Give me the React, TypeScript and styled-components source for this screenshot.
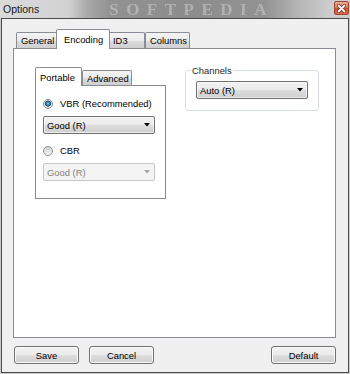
import styled, { createGlobalStyle } from "styled-components";

const GlobalStyle = createGlobalStyle`
  html, body {
    margin: 0;
    padding: 0;
  }

  body {
    width: 350px;
    height: 374px;
    overflow: hidden;
    background: #c9c9c9;
    font-family: "Liberation Sans", Arial, sans-serif;
    font-size: 9.4px;
    color: #000;
  }
`;

function ArrowIcon({ color }: { color: string }) {
  return (
    <svg width="6" height="4" viewBox="0 0 6 4">
      <polygon points="0,0 6,0 3,3.5" fill={color} />
    </svg>
  );
}

function CloseIcon() {
  return (
    <svg width="9" height="9" viewBox="0 0 9 9">
      <path d="M1.5 1.5 L7.5 7.5 M7.5 1.5 L1.5 7.5" stroke="#6a3024" strokeWidth="3.4" strokeLinecap="round" />
      <path d="M1.5 1.5 L7.5 7.5 M7.5 1.5 L1.5 7.5" stroke="#ffffff" strokeWidth="1.8" strokeLinecap="round" />
    </svg>
  );
}

function Radio({ checked, label }: { checked?: boolean; label: string }) {
  return (
    <RadioRow>
      <RadioDot $checked={checked} />
      <span>{label}</span>
    </RadioRow>
  );
}

function ComboBox({ value, disabled }: { value: string; disabled?: boolean }) {
  return (
    <Combo $disabled={disabled}>
      <span>{value}</span>
      <ArrowIcon color={disabled ? "#a6a6a6" : "#000"} />
    </Combo>
  );
}

const outerTabs = [
  { label: "General", w: 42 },
  { label: "Encoding", w: 50, selected: true },
  { label: "ID3", w: 37 },
  { label: "Columns", w: 45 },
];

export default function App() {
  return (
    <>
      <GlobalStyle />
      <Window>
        <TitleBar>
          <Title>Options</Title>
          <Watermark>SOFTPEDIA</Watermark>
          <CloseButton>
            <CloseIcon />
          </CloseButton>
        </TitleBar>

        <Client>
          <TabStrip>
            {outerTabs.map((t) => (
              <Tab key={t.label} $w={t.w} $selected={t.selected} $spread>
                {t.label}
              </Tab>
            ))}
          </TabStrip>

          <Panel>
            <SubTabs>
              <SubStrip>
                <Tab $w={47} $selected>
                  Portable
                </Tab>
                <Tab $w={50} $short>
                  Advanced
                </Tab>
              </SubStrip>
              <SubPanel>
                <OptionGroup>
                  <Radio checked label="VBR (Recommended)" />
                  <ComboBox value="Good (R)" />
                </OptionGroup>
                <OptionGroup>
                  <Radio label="CBR" />
                  <ComboBox value="Good (R)" disabled />
                </OptionGroup>
              </SubPanel>
            </SubTabs>

            <GroupBox>
              <Legend>Channels</Legend>
              <ComboBox value="Auto (R)" />
            </GroupBox>
          </Panel>

          <ButtonBar>
            <PushButton>Save</PushButton>
            <PushButton>Cancel</PushButton>
            <PushButton $right>Default</PushButton>
          </ButtonBar>
        </Client>
      </Window>
    </>
  );
}

const Window = styled.div`
  width: 350px;
  height: 374px;
  display: flex;
  flex-direction: column;
`;

const TitleBar = styled.div`
  height: 18px;
  display: flex;
  align-items: flex-start;
  background: linear-gradient(
    90deg,
    #dadada 0,
    #d2d2d2 68px,
    #a8a8a8 88px,
    #929292 110px,
    #8c8c8c 190px,
    #939393 265px,
    #b6b6b6 300px,
    #cdcdcd 330px
  );
`;

const Title = styled.div`
  padding: 3px 0 0 3px;
  font-size: 10.5px;
  line-height: 12px;
  color: #1a1a1a;
`;

const Watermark = styled.div`
  margin: 1px 0 0 70px;
  font-family: "Liberation Serif", "Times New Roman", serif;
  font-weight: bold;
  font-size: 17px;
  line-height: 17px;
  letter-spacing: 7.5px;
  color: rgba(220, 220, 220, 0.45);
  filter: blur(0.7px);
  white-space: nowrap;
`;

const CloseButton = styled.div`
  box-sizing: border-box;
  width: 15px;
  height: 14px;
  margin: 1px 1px 0 auto;
  display: flex;
  align-items: center;
  justify-content: center;
  border: 1px solid #9a4632;
  border-radius: 2px;
  background: linear-gradient(#eeaa94 0%, #df7a5d 45%, #cd4d2e 55%, #dc6c48 100%);
`;

const Client = styled.div`
  box-sizing: border-box;
  height: 355px;
  margin: 0 1px;
  display: flex;
  flex-direction: column;
  padding: 10px 12px 8px 11px;
  border: 1px solid #4b4b4b;
  background: #f0f0f0;
`;

const TabStrip = styled.div`
  height: 19px;
  display: flex;
  align-items: flex-end;
  padding-left: 3px;
`;

const Tab = styled.div<{ $w: number; $selected?: boolean; $spread?: boolean; $short?: boolean }>`
  position: relative;
  box-sizing: border-box;
  flex: none;
  width: ${(p) => p.$w + (p.$selected && p.$spread ? 4 : 0)}px;
  height: ${(p) => (p.$selected ? (p.$spread ? 20 : 19) : p.$short ? 15 : 16)}px;
  margin: ${(p) => (p.$selected ? (p.$spread ? "0 -2px -1px" : "0 0 -1px") : "0")};
  padding-left: ${(p) => (p.$selected && p.$spread ? 7 : 4)}px;
  display: flex;
  align-items: center;
  white-space: nowrap;
  border: 1px solid #898c95;
  border-bottom: none;
  border-radius: 2px 2px 0 0;
  background: ${(p) =>
    p.$selected ? "#ffffff" : "linear-gradient(#f3f3f3 0%, #ebebeb 50%, #dddddd 51%, #cfcfcf 100%)"};
  z-index: ${(p) => (p.$selected ? 2 : 1)};
`;

const Panel = styled.div`
  position: relative;
  z-index: 0;
  flex: 1;
  display: flex;
  align-items: flex-start;
  padding: 18px 0 0 21px;
  border: 1px solid #898c95;
  background: #ffffff;
`;

const SubTabs = styled.div`
  width: 131px;
  display: flex;
  flex-direction: column;
`;

const SubStrip = styled.div`
  height: 18px;
  display: flex;
  align-items: flex-end;
`;

const SubPanel = styled.div`
  position: relative;
  z-index: 0;
  box-sizing: border-box;
  height: 114px;
  display: flex;
  flex-direction: column;
  gap: 10px;
  padding: 11px 0 0 7px;
  border: 1px solid #898c95;
  background: #ffffff;
`;

const OptionGroup = styled.div`
  display: flex;
  flex-direction: column;
  gap: 6px;
`;

const RadioRow = styled.label`
  height: 13px;
  display: flex;
  align-items: center;
  gap: 7px;
  line-height: 13px;
`;

const RadioDot = styled.span<{ $checked?: boolean }>`
  box-sizing: border-box;
  flex: none;
  width: 10px;
  height: 10px;
  border-radius: 50%;
  border: 1px solid #8e8f8f;
  background: ${(p) =>
    p.$checked
      ? "radial-gradient(circle at 50% 45%, #9ad6f4 0, #3a8fc6 1.3px, #1c4f78 2.8px, #dcdcdc 3.3px, #f6f6f6 5px)"
      : "linear-gradient(#cfcfcf, #f7f7f7)"};
`;

const Combo = styled.div<{ $disabled?: boolean }>`
  box-sizing: border-box;
  width: 112px;
  height: 18px;
  display: flex;
  align-items: center;
  justify-content: space-between;
  padding: 0 4px 0 3px;
  border: 1px solid ${(p) => (p.$disabled ? "#c6c6c6" : "#707070")};
  border-radius: 2px;
  color: ${(p) => (p.$disabled ? "#838383" : "#000")};
  background: ${(p) =>
    p.$disabled ? "#f4f4f4" : "linear-gradient(#f2f2f2 0%, #ebebeb 50%, #dddddd 51%, #cfcfcf 100%)"};
  box-shadow: ${(p) => (p.$disabled ? "none" : "inset 0 0 0 1px rgba(255, 255, 255, 0.6)")};
`;

const GroupBox = styled.fieldset`
  box-sizing: border-box;
  width: 134px;
  margin: -3px 0 0 19px;
  padding: 4px 10px 11px;
  border: 1px solid #d5dfe5;
  border-radius: 3px;
`;

const Legend = styled.legend`
  margin-left: -5px;
  padding: 0 1px;
  line-height: 13px;
  color: #1e1e1e;
`;

const ButtonBar = styled.div`
  height: 18px;
  margin-top: 8px;
  display: flex;
  gap: 10px;
  padding-left: 1px;
`;

const PushButton = styled.button<{ $right?: boolean }>`
  box-sizing: border-box;
  width: 65px;
  height: 18px;
  margin-left: ${(p) => (p.$right ? "auto" : "0")};
  padding: 0;
  font-family: "Liberation Sans", Arial, sans-serif;
  font-size: 9.4px;
  color: #000;
  border: 1px solid #707070;
  border-radius: 3px;
  background: linear-gradient(#f2f2f2 0%, #ebebeb 50%, #dddddd 51%, #cfcfcf 100%);
  box-shadow: inset 0 0 0 1px #fcfcfc;
`;
